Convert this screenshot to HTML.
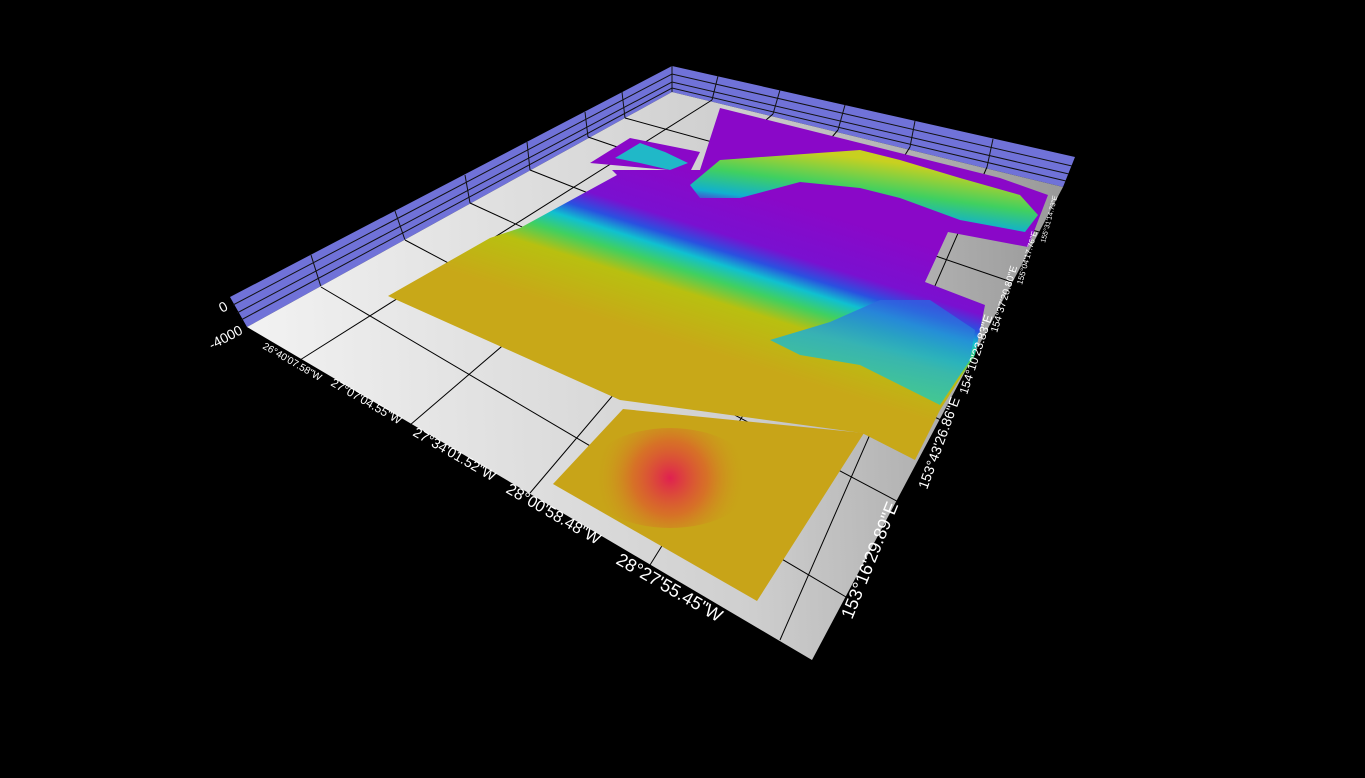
<!DOCTYPE html><html><head><style>html,body{margin:0;padding:0;background:#000;width:1365px;height:778px;overflow:hidden}svg{display:block}text{font-family:"Liberation Sans",sans-serif;fill:#fff}</style></head><body>
<svg width="1365" height="778" viewBox="0 0 1365 778">
<defs>
<linearGradient id="fl" x1="250" y1="330" x2="1060" y2="300" gradientUnits="userSpaceOnUse"><stop offset="0" stop-color="#f2f2f2"/><stop offset="0.6" stop-color="#cfcfcf"/><stop offset="1" stop-color="#9a9a9a"/></linearGradient>
<linearGradient id="tg" x1="720" y1="180" x2="670" y2="340" gradientUnits="userSpaceOnUse">
<stop offset="0" stop-color="#8a08c8"/><stop offset="0.3" stop-color="#7a10d0"/><stop offset="0.4" stop-color="#2a50e0"/><stop offset="0.48" stop-color="#10c0d0"/><stop offset="0.58" stop-color="#40d060"/><stop offset="0.7" stop-color="#b8c010"/><stop offset="1" stop-color="#c8a818"/></linearGradient>
<linearGradient id="rg" x1="800" y1="150" x2="790" y2="225" gradientUnits="userSpaceOnUse"><stop offset="0" stop-color="#c8d020"/><stop offset="0.4" stop-color="#40d060"/><stop offset="0.7" stop-color="#10b0d0"/><stop offset="1" stop-color="#5020d0" stop-opacity="0"/></linearGradient>
<linearGradient id="cg" x1="900" y1="300" x2="880" y2="400" gradientUnits="userSpaceOnUse"><stop offset="0" stop-color="#3060e0"/><stop offset="0.5" stop-color="#20b0d0"/><stop offset="1" stop-color="#30d0a0"/></linearGradient>
<radialGradient id="red" cx="670" cy="478" r="75" gradientUnits="userSpaceOnUse"><stop offset="0" stop-color="#e02050"/><stop offset="0.5" stop-color="#e05030" stop-opacity="0.6"/><stop offset="1" stop-color="#c8a018" stop-opacity="0"/></radialGradient>
</defs>
<polygon points="230,297 672,66 1075,157 1063,187 672,92 247,327" fill="#7072d8"/>
<g stroke="#111" stroke-width="1" fill="none">
<polyline points="233,305 672,74 1072,166"/><polyline points="237,313 672,82 1069,174"/><polyline points="241,320 672,88 1066,181"/>
<line x1="311" y1="255" x2="321" y2="287"/><line x1="395" y1="211" x2="405" y2="240"/><line x1="465" y1="175" x2="470" y2="203"/><line x1="527" y1="142" x2="530" y2="170"/><line x1="585" y1="112" x2="588" y2="137"/><line x1="622" y1="92" x2="625" y2="118"/><line x1="672" y1="66" x2="672" y2="92"/>
<line x1="718" y1="76" x2="712" y2="100"/><line x1="780" y1="90" x2="773" y2="114"/><line x1="845" y1="105" x2="838" y2="130"/><line x1="915" y1="121" x2="910" y2="147"/><line x1="993" y1="139" x2="987" y2="167"/>
</g>
<polygon points="247,327 672,92 1063,187 812,660" fill="url(#fl)"/>
<g stroke="#000" stroke-width="1">
<line x1="321" y1="287" x2="885" y2="620"/><line x1="405" y1="240" x2="940" y2="524"/><line x1="470" y1="203" x2="980" y2="438"/><line x1="530" y1="170" x2="1010" y2="360"/><line x1="588" y1="137" x2="1035" y2="290"/><line x1="625" y1="118" x2="1050" y2="235"/>
<line x1="712" y1="100" x2="300" y2="360"/><line x1="773" y1="114" x2="410" y2="425"/><line x1="838" y1="130" x2="530" y2="493"/><line x1="910" y1="147" x2="650" y2="565"/><line x1="987" y1="167" x2="780" y2="640"/>
</g>
<polygon points="590,163 630,138 700,152 690,172" fill="#8a08c8"/>
<polygon points="615,158 640,143 665,152 688,163 670,170 640,163" fill="#20b8c8"/>
<polygon points="388,296 490,238 520,228 617,175 612,170 700,170 720,108 1000,178 1048,195 1028,247 948,232 925,282 985,305 975,355 940,410 915,460 862,433 620,400" fill="url(#tg)"/>
<polygon points="623,409 864,433 757,601 553,484" fill="#c8a418"/>
<ellipse cx="670" cy="478" rx="85" ry="50" fill="url(#red)"/>
<polygon points="690,185 720,160 860,150 900,160 960,178 1020,195 1038,215 1025,232 960,220 900,198 860,188 800,182 740,198 700,198" fill="url(#rg)"/>
<polygon points="770,340 830,322 880,300 930,300 975,330 970,360 940,405 900,385 860,365 800,355" fill="url(#cg)" opacity="0.85"/>
<text x="222" y="313" font-size="14" transform="rotate(-28 222 313)">0</text>
<text x="212" y="350" font-size="14" transform="rotate(-28 212 350)">-4000</text>
<text x="262" y="348" font-size="10" transform="rotate(30 262 348)">26°40'07.58"W</text>
<text x="330" y="385" font-size="12" transform="rotate(30 330 385)">27°07'04.55"W</text>
<text x="412" y="435" font-size="14" transform="rotate(30 412 435)">27°34'01.52"W</text>
<text x="505" y="492" font-size="16" transform="rotate(30 505 492)">28°00'58.48"W</text>
<text x="615" y="563" font-size="18" transform="rotate(30 615 563)">28°27'55.45"W</text>
<text x="852" y="620" font-size="18" transform="rotate(-68 852 620)">153°16'29.89"E</text>
<text x="927" y="490" font-size="14" transform="rotate(-70 927 490)">153°43'26.86"E</text>
<text x="967" y="395" font-size="12" transform="rotate(-72 967 395)">154°10'23.83"E</text>
<text x="997" y="333" font-size="10" transform="rotate(-73 997 333)">154°37'20.80"E</text>
<text x="1022" y="285" font-size="8" transform="rotate(-74 1022 285)">155°04'17.76"E</text>
<text x="1045" y="243" font-size="7" transform="rotate(-75 1045 243)">155°31'14.73"E</text>
</svg></body></html>
